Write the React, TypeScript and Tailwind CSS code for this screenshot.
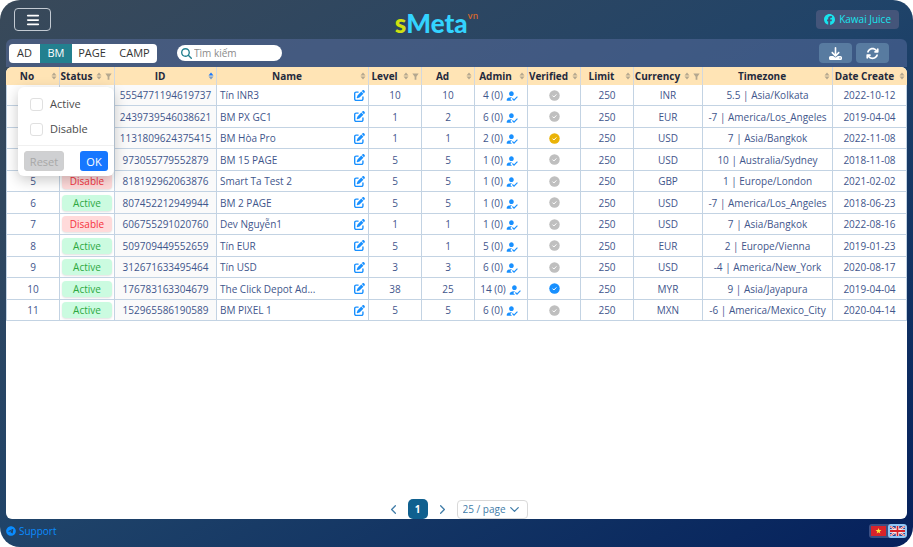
import type { ReactNode } from "react";
import {
  FaArrowsRotate,
  FaBars,
  FaDownload,
  FaFacebook,
  FaMagnifyingGlass,
  FaPenToSquare,
  FaTelegram,
} from "react-icons/fa6";
import { MdHowToReg } from "react-icons/md";
import { ChevronLeft, ChevronRight, ChevronDown } from "lucide-react";

type Verified = "none" | "pending" | "yes";

interface Row {
  status: "Active" | "Disable";
  id: string;
  name: string;
  level: number;
  ad: number;
  admin: string;
  verified: Verified;
  currency: string;
  timezone: string;
  created: string;
}

const row = (
  status: Row["status"],
  id: string,
  name: string,
  level: number,
  ad: number,
  admin: string,
  verified: Verified,
  currency: string,
  timezone: string,
  created: string,
): Row => ({ status, id, name, level, ad, admin, verified, currency, timezone, created });

const rows: Row[] = [
  row("Active", "5554771194619737", "Tín INR3", 10, 10, "4 (0)", "none", "INR", "5.5 | Asia/Kolkata", "2022-10-12"),
  row("Active", "2439739546038621", "BM PX GC1", 1, 2, "6 (0)", "none", "EUR", "-7 | America/Los_Angeles", "2019-04-04"),
  row("Active", "1131809624375415", "BM Hòa Pro", 1, 1, "2 (0)", "pending", "USD", "7 | Asia/Bangkok", "2022-11-08"),
  row("Active", "973055779552879", "BM 15 PAGE", 5, 5, "1 (0)", "none", "USD", "10 | Australia/Sydney", "2018-11-08"),
  row("Disable", "818192962063876", "Smart Ta Test 2", 5, 5, "1 (0)", "none", "GBP", "1 | Europe/London", "2021-02-02"),
  row("Active", "807452212949944", "BM 2 PAGE", 5, 5, "1 (0)", "none", "USD", "-7 | America/Los_Angeles", "2018-06-23"),
  row("Disable", "606755291020760", "Dev Nguyễn1", 1, 1, "1 (0)", "none", "USD", "7 | Asia/Bangkok", "2022-08-16"),
  row("Active", "509709449552659", "Tín EUR", 5, 1, "5 (0)", "none", "EUR", "2 | Europe/Vienna", "2019-01-23"),
  row("Active", "312671633495464", "Tín USD", 3, 3, "6 (0)", "none", "USD", "-4 | America/New_York", "2020-08-17"),
  row("Active", "176783163304679", "The Click Depot Ad...", 38, 25, "14 (0)", "yes", "MYR", "9 | Asia/Jayapura", "2019-04-04"),
  row("Active", "152965586190589", "BM PIXEL 1", 5, 5, "6 (0)", "none", "MXN", "-6 | America/Mexico_City", "2020-04-14"),
];

const columns = [
  { label: "No", width: "w-[54px]" },
  { label: "Status", width: "w-[55px]", filter: true },
  { label: "ID", width: "w-[102px]", sorted: true },
  { label: "Name", width: "w-[152px]" },
  { label: "Level", width: "w-[53px]", filter: true },
  { label: "Ad", width: "w-[53px]" },
  { label: "Admin", width: "w-[53px]" },
  { label: "Verified", width: "w-[53px]" },
  { label: "Limit", width: "w-[53px]" },
  { label: "Currency", width: "w-[69px]", filter: true },
  { label: "Timezone", width: "w-[130px]" },
  { label: "Date Create", width: "w-[74px]" },
];

const verifiedColor: Record<Verified, string> = {
  none: "text-[#bfbfbf]",
  pending: "text-[#eab308]",
  yes: "text-[#1890ff]",
};

function Sorter({ active }: { active?: boolean }) {
  return (
    <svg viewBox="0 0 6 8" className="h-2 w-[6px] shrink-0" aria-hidden="true">
      <path d="M3 0.6 5.5 3.5h-5z" fill={active ? "#1677ff" : "#b5a88f"} />
      <path d="M3 7.4 5.5 4.5h-5z" fill={active ? "#7c9cc4" : "#b5a88f"} />
    </svg>
  );
}

function Funnel() {
  return (
    <svg viewBox="0 0 8 8" className="size-[7px] shrink-0" aria-hidden="true">
      <path d="M0.4 0.6h7.2L5 4.2v3.4H3V4.2z" fill="#b5a88f" />
    </svg>
  );
}

function VerifiedBadge({ state }: { state: Verified }) {
  return (
    <svg viewBox="0 0 22 22" className={`mx-auto size-[11px] ${verifiedColor[state]}`} aria-hidden="true">
      <circle cx="11" cy="11" r="10.5" fill="currentColor" />
      <path d="m7 11.2 2.8 2.8 5-5.2" fill="none" stroke="#fff" strokeWidth="2" />
    </svg>
  );
}

function FilterMenu() {
  return (
    <div className="absolute top-full right-0 z-10 mt-[2px] w-24 rounded-md bg-white text-left text-[11px] font-normal text-[#4b4b4b] shadow-[0_4px_14px_rgba(0,0,0,0.22)]">
      <div className="flex flex-col gap-[5px] px-3 pt-[7px] pb-[6px]">
        {["Active", "Disable"].map((option) => (
          <label key={option} className="flex h-5 items-center gap-[7px]">
            <input
              type="checkbox"
              className="size-[13px] appearance-none rounded-[3px] border border-[#e0e0e0] bg-white"
            />
            {option}
          </label>
        ))}
      </div>
      <div className="flex justify-between border-t border-[#f0f0f0] px-[6px] py-[5px]">
        <button type="button" disabled className="h-5 w-10 rounded-[3px] border border-[#cfcfcf] bg-[#cfd0d2] leading-none text-[#a8a8a8]">
          Reset
        </button>
        <button type="button" className="h-5 w-7 rounded-[3px] bg-[#1677ff] leading-none text-white">
          OK
        </button>
      </div>
    </div>
  );
}

function Cell({ children, className = "" }: { children: ReactNode; className?: string }) {
  return (
    <td className={`border-r border-b border-[#c3d3e3] p-0 first:border-l ${className}`}>{children}</td>
  );
}

function AccountsTable() {
  return (
    <table className="w-full table-fixed border-separate border-spacing-0 text-center text-[10px] leading-4 whitespace-nowrap text-[#3f568c]">
      <colgroup>
        {columns.map((c) => (
          <col key={c.label} className={c.width} />
        ))}
      </colgroup>
      <thead>
        <tr className="h-[18px] text-[#1f2a3d]">
          {columns.map((c) => (
            <th
              key={c.label}
              className="relative border-r border-[#d3d8dd] bg-[#ffe4b5] p-0 font-bold last:rounded-tr-md last:border-r-0 first:rounded-tl-md"
            >
              <div className="flex items-center gap-[3px] pr-[2px]">
                <span className="min-w-0 flex-1">{c.label}</span>
                <Sorter active={c.sorted} />
                {c.filter && <Funnel />}
              </div>
              {c.label === "Status" && <FilterMenu />}
            </th>
          ))}
        </tr>
      </thead>
      <tbody>
        {rows.map((r, i) => (
          <tr key={r.id} className="odd:h-[21px] even:h-[22px]">
            <Cell>{i + 1}</Cell>
            <Cell className="px-[2px]">
              <span
                className={`block rounded-[4px] shadow-[0_1px_2px_rgba(0,0,0,0.12)] ${
                  r.status === "Active" ? "bg-[#cbfbe0] text-[#2da83f]" : "bg-[#ffdada] text-[#f5323c]"
                }`}
              >
                {r.status}
              </span>
            </Cell>
            <Cell className="bg-[#fafafa]">{r.id}</Cell>
            <Cell className="px-[3px]">
              <div className="flex items-center justify-between">
                {r.name}
                <button type="button" aria-label={`Edit ${r.name}`} className="text-[11px] text-[#1890ff]">
                  <FaPenToSquare />
                </button>
              </div>
            </Cell>
            <Cell>{r.level}</Cell>
            <Cell>{r.ad}</Cell>
            <Cell>
              <div className="flex items-center justify-center gap-[2px]">
                {r.admin}
                <button type="button" aria-label={`Edit admins of ${r.name}`} className="pt-[2px] text-[14px] text-[#1890ff]">
                  <MdHowToReg />
                </button>
              </div>
            </Cell>
            <Cell>
              <VerifiedBadge state={r.verified} />
            </Cell>
            <Cell>250</Cell>
            <Cell>{r.currency}</Cell>
            <Cell>{r.timezone}</Cell>
            <Cell>{r.created}</Cell>
          </tr>
        ))}
      </tbody>
    </table>
  );
}

function VietnamFlag() {
  return (
    <svg viewBox="0 0 15 10" className="h-[10px] w-[15px]" aria-hidden="true">
      <path fill="#d8232a" d="M0 0h15v10H0z" />
      <path fill="#ffeb3b" d="m7.5 2 .75 2.1h2.2L8.7 5.4l.65 2.2L7.5 6.3 5.65 7.6l.65-2.2-1.75-1.3h2.2z" />
    </svg>
  );
}

function BritainFlag() {
  return (
    <svg viewBox="0 0 15 10" className="h-[10px] w-[15px]" aria-hidden="true">
      <path fill="#27408f" d="M0 0h15v10H0z" />
      <path stroke="#fff" strokeWidth="2" d="m0 0 15 10M15 0 0 10" />
      <path stroke="#d8232a" strokeWidth="0.8" d="m0 0 15 10M15 0 0 10" />
      <path stroke="#fff" strokeWidth="3.4" d="M7.5 0v10M0 5h15" />
      <path stroke="#d8232a" strokeWidth="1.8" d="M7.5 0v10M0 5h15" />
    </svg>
  );
}

export default function App() {
  return (
    <div className="bg-white font-['Open_Sans','Noto_Sans',sans-serif]">
      <div className="flex min-h-screen flex-col rounded-[20px] bg-linear-to-br from-[#394959] via-[#1f4369] to-[#06205c] px-[6px]">
        <header className="grid h-[39px] grid-cols-3 items-center px-2">
          <button
            type="button"
            aria-label="Menu"
            className="flex h-[23px] w-[37px] items-center justify-center rounded-[4px] border border-[#c3cad2] text-sm text-white"
          >
            <FaBars />
          </button>
          <h1 className="flex items-baseline justify-center pt-[7px] pr-10 font-['Lato',sans-serif] text-[26px] leading-8 font-black text-[#33d3ff]">
            <span className="text-[#d0e010]">s</span>
            Meta
            <sup className="top-0 self-start pt-px font-['Inter',sans-serif] text-[9px] leading-4 font-medium text-[#d9692a]">vn</sup>
          </h1>
          <button
            type="button"
            className="flex h-[19px] items-center gap-1 justify-self-end rounded-[4px] bg-[#44557a] px-2 text-[10px] font-medium text-[#17e4ee]"
          >
            <FaFacebook className="size-[11px]" />
            Kawai Juice
          </button>
        </header>

        <main className="flex flex-1 flex-col">
          <div className="flex h-7 items-center rounded-t-md bg-[#5a6ea0]/50 px-[3px]">
            <nav className="flex h-[19px] overflow-hidden rounded-[4px] bg-white text-[11px] font-medium text-[#333]">
              <button type="button" className="w-[31px]">AD</button>
              <button type="button" className="w-8 bg-[#23808f] text-white">BM</button>
              <button type="button" className="w-10">PAGE</button>
              <button type="button" className="w-[45px]">CAMP</button>
            </nav>
            <label className="ml-5 flex h-4 w-[105px] items-center gap-[2px] rounded-full bg-white px-1 text-[#23808f]">
              <FaMagnifyingGlass className="size-[11px] shrink-0" />
              <input
                type="text"
                aria-label="Tìm kiếm"
                placeholder="Tìm kiếm"
                className="w-full min-w-0 bg-transparent text-[10px] outline-none placeholder:text-[#8a8a8a]"
              />
            </label>
            <div className="mr-[15px] ml-auto flex gap-1 text-[13px] text-white">
              <button type="button" aria-label="Download" className="flex h-5 w-[33px] items-center justify-center rounded-[4px] bg-[#587ba0]">
                <FaDownload />
              </button>
              <button type="button" aria-label="Refresh" className="flex h-5 w-[33px] items-center justify-center rounded-[4px] bg-[#587ba0]">
                <FaArrowsRotate />
              </button>
            </div>
          </div>

          <section className="flex flex-1 flex-col justify-between rounded-md bg-white">
            <AccountsTable />
            <div className="flex h-5 items-center justify-center gap-[7px] text-[10px] text-[#3f7ca8]">
              <button type="button" aria-label="Previous page">
                <ChevronLeft className="size-[15px]" />
              </button>
              <button type="button" className="h-5 w-5 rounded-[5px] bg-[#10608f] font-bold text-white">1</button>
              <button type="button" aria-label="Next page">
                <ChevronRight className="size-[15px]" />
              </button>
              <div className="relative flex items-center">
                <select aria-label="Page size" className="h-[19px] w-[71px] appearance-none rounded-[4px] border border-[#d9d9d9] bg-white pl-[5px]">
                  <option>25 / page</option>
                </select>
                <ChevronDown className="pointer-events-none absolute right-[6px] size-[15px]" />
              </div>
            </div>
          </section>
        </main>

        <footer className="flex h-7 items-center justify-between">
          <a href="#support" className="flex items-center gap-[3px] pb-1 text-[10px] text-[#0a8cff]">
            <FaTelegram className="size-[10px]" />
            Support
          </a>
          <div className="mb-1 flex h-[14px] overflow-hidden rounded-[3px] bg-[#3c4f83]">
            <button type="button" aria-label="Tiếng Việt" className="flex w-[19px] items-center justify-center">
              <VietnamFlag />
            </button>
            <button type="button" aria-label="English" className="flex w-[19px] items-center justify-center rounded-[3px] bg-[#8fc6f5]">
              <BritainFlag />
            </button>
          </div>
        </footer>
      </div>
    </div>
  );
}
